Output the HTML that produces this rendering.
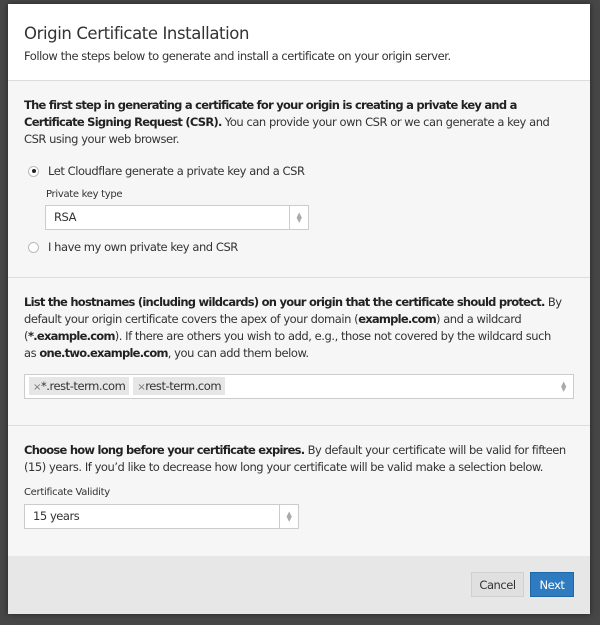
<!DOCTYPE html>
<html><head><style>
*{box-sizing:border-box;margin:0;padding:0}
body{width:600px;height:625px;background:#474747;font-family:"DejaVu Sans","Liberation Sans",sans-serif;font-size:11.5px;letter-spacing:-0.45px;color:#333;position:relative;overflow:hidden}
.modal{position:absolute;left:8px;top:4px;width:582px;height:610px;background:#f6f6f6;box-shadow:0 0 6px rgba(0,0,0,.5)}
.hdr{background:#fff;height:77px;border-bottom:1px solid #ddd;padding:19px 15px 0 16px}
.hdr h1{font-weight:normal;font-size:16.5px;letter-spacing:-0.4px;color:#333;line-height:22px}
.hdr p{margin-top:3px;line-height:16px}
.sec{border-bottom:1px solid #ddd;padding:0 4px 0 16px;position:relative}
p.t{line-height:17px;white-space:nowrap}
b{color:#222;letter-spacing:-0.75px}
.radio{display:flex;align-items:center;height:20px}
.rb{width:11px;height:11px;border-radius:50%;border:1px solid #bbb;background:#fff;margin-left:4px;margin-right:9px;position:relative}
.rb.on:after{content:"";position:absolute;left:2.5px;top:2.5px;width:4px;height:4px;border-radius:50%;background:#222}
.lbl{font-size:10px;color:#333;letter-spacing:-0.3px}
.sel{background:#fff;border:1px solid #ccc;height:25px;position:relative;line-height:23px;padding-left:8px}
.sel .arr{position:absolute;right:0;top:0;width:19px;height:23px;border-left:1px solid #ccc;color:#aaa;font-size:7px;line-height:5px;text-align:center;padding-top:7px}
.tag{display:inline-block;background:#e6e6e6;height:18px;line-height:18px;padding:0 4px;margin-right:4px;color:#333}
.tag span{color:#777;font-size:10px}
.foot{position:absolute;left:0;right:0;bottom:0;height:58px;background:#e7e7e7}
.btn{position:absolute;top:16px;height:25px;line-height:24px;text-align:center;font-size:11.5px}
</style></head><body>
<div class="modal">
 <div class="hdr"><h1>Origin Certificate Installation</h1><p>Follow the steps below to generate and install a certificate on your origin server.</p></div>
 <div class="sec" style="height:197px;padding-top:16px">
  <p class="t"><b>The first step in generating a certificate for your origin is creating a private key and a<br>Certificate Signing Request (CSR).</b> You can provide your own CSR or we can generate a key and<br>CSR using your web browser.</p>
  <div class="radio" style="margin-top:13px"><div class="rb on"></div>Let Cloudflare generate a private key and a CSR</div>
  <div class="lbl" style="margin:8px 0 0 22px">Private key type</div>
  <div class="sel" style="margin:5px 0 0 21px;width:264px">RSA<div class="arr">▲<br>▼</div></div>
  <div class="radio" style="margin-top:7px"><div class="rb"></div>I have my own private key and CSR</div>
 </div>
 <div class="sec" style="height:148px;padding-top:16px">
  <p class="t"><b>List the hostnames (including wildcards) on your origin that the certificate should protect.</b> By<br>default your origin certificate covers the apex of your domain (<b>example.com</b>) and a wildcard<br>(<b>*.example.com</b>). If there are others you wish to add, e.g., those not covered by the wildcard such<br>as <b>one.two.example.com</b>, you can add them below.</p>
  <div class="sel" style="margin-top:12px;width:550px;height:25px;padding-left:4px;padding-top:2px;line-height:18px"><span class="tag"><span>×</span>*.rest-term.com</span><span class="tag"><span>×</span>rest-term.com</span><div class="arr" style="border:none">▲<br>▼</div></div>
 </div>
 <div class="sec" style="border:none;padding-top:16px">
  <p class="t"><b>Choose how long before your certificate expires.</b> By default your certificate will be valid for fifteen<br>(15) years. If you’d like to decrease how long your certificate will be valid make a selection below.</p>
  <div class="lbl" style="margin-top:11px">Certificate Validity</div>
  <div class="sel" style="margin-top:6px;width:275px">15 years<div class="arr">▲<br>▼</div></div>
 </div>
 <div class="foot">
  <div class="btn" style="left:463px;width:53px;background:#e0e0e0;border:1px solid #d0d0d0;color:#333">Cancel</div>
  <div class="btn" style="left:522px;width:44px;background:#2f7bbf;border:1px solid #1f68a8;color:#fff">Next</div>
 </div>
</div>
</body></html>
